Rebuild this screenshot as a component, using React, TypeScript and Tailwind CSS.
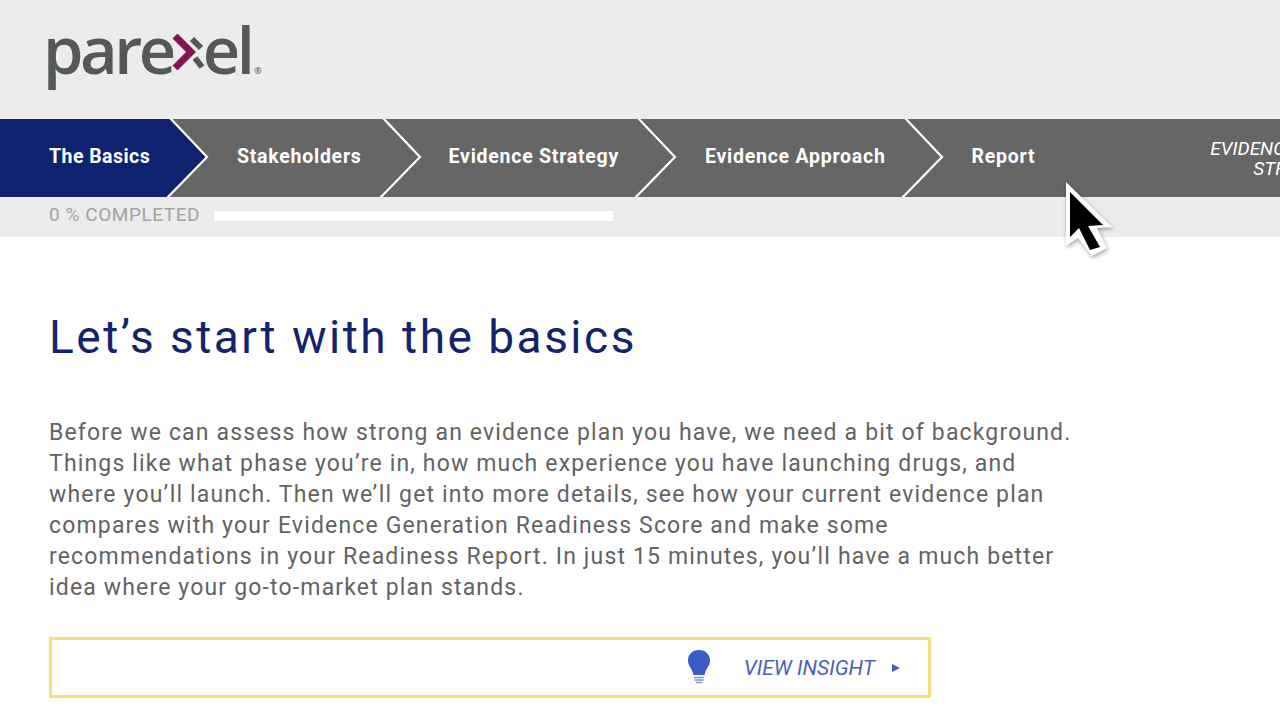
import React from 'react';

const steps = [
  { label: 'Stakeholders', ml: 'ml-[27px]', chevronMl: 'ml-[16px]' },
  { label: 'Evidence Strategy', ml: 'ml-[26px]', chevronMl: 'ml-[14px]' },
  { label: 'Evidence Approach', ml: 'ml-[27px]', chevronMl: 'ml-[14px]' },
];

function Chevron({ fill }: { fill?: string }) {
  return (
    <svg width="45" height="78" viewBox="0 0 45 78" className="shrink-0 block">
      {fill && <polygon points="0,0 5,0 42,38 2,78 0,78" fill={fill} />}
      <polyline points="5,-1 42,38 2,79" fill="none" stroke="#fff" strokeWidth="2.2" />
    </svg>
  );
}

function Logo() {
  return (
    <div className="flex items-baseline text-[#54585a] font-['Open_Sans',sans-serif] text-[65px] leading-none font-semibold tracking-[-3.5px]">
      <span>pare</span>
      <svg width="36" height="36" viewBox="0 0 36 36" className="mx-[-3px] self-end mb-[12px]">
        <path d="M22 5 L31 14 M25 24 L32 33" stroke="#54585a" strokeWidth="6" fill="none" />
        <path d="M5 2 L21 18 L5 34" stroke="#8a1250" strokeWidth="7" fill="none" />
      </svg>
      <span>el</span>
      <span className="text-[9px] tracking-normal ml-[3px]">®</span>
    </div>
  );
}

export default function App() {
  return (
    <div className="relative w-[1280px] h-[720px] overflow-hidden bg-white font-['Roboto',sans-serif]">
      <header className="h-[119px] bg-[#ececec] pl-[43px] pt-[17px]">
        <Logo />
      </header>

      <nav className="h-[78px] bg-[#666666] flex items-center overflow-hidden text-white font-bold text-[19.5px] tracking-[0.75px]">
        <div className="w-[165px] h-full bg-[#0f2270] pl-[49px] pb-[2px] flex items-center shrink-0 tracking-[0.45px]">The Basics</div>
        <Chevron fill="#0f2270" />
        {steps.map((s) => (
          <React.Fragment key={s.label}>
            <span className={`${s.ml} pb-[2px] whitespace-nowrap`}>{s.label}</span>
            <span className={s.chevronMl}>
              <Chevron />
            </span>
          </React.Fragment>
        ))}
        <span className="ml-[27px] pb-[2px]">Report</span>
        <div className="ml-[175px] shrink-0 font-normal italic text-[19px] leading-[20px] tracking-normal whitespace-nowrap">
          <div className="pt-[1px]">EVIDENCE</div>
          <div className="pl-[43px]">STRENGTH</div>
        </div>
      </nav>

      <div className="h-[40px] bg-[#ececec] pl-[49px] flex items-center pb-[3px] gap-[14px]">
        <span className="text-[19px] text-[#a3a3a3] tracking-[0.55px]">0 % COMPLETED</span>
        <div className="w-[399px] h-[10px] bg-white" />
      </div>

      <main className="pl-[49px]">
        <h1 className="mt-[70px] text-[46px] leading-[60px] font-normal text-[#14246c] tracking-[2.5px]">Let’s start with the basics</h1>
        <p className="mt-[50px] w-[1100px] text-[23px] leading-[31px] text-[#636363] tracking-[1.16px]">
          Before we can assess how strong an evidence plan you have, we need a bit of background.<br />
          Things like what phase you’re in, how much experience you have launching drugs, and<br />
          where you’ll launch. Then we’ll get into more details, see how your current evidence plan<br />
          compares with your Evidence Generation Readiness Score and make some<br />
          recommendations in your Readiness Report. In just 15 minutes, you’ll have a much better<br />
          idea where your go-to-market plan stands.
        </p>
        <div className="mt-[34px] w-[882px] h-[61px] border-[3px] border-[#f5e07c] flex items-center justify-end pr-[28px]">
          <svg width="24" height="36" viewBox="0 0 24 36" className="mr-[33px] mb-[1px]">
            <path d="M12 1 C5 1 1 6 1 11.5 C1 17 5 19 6.5 26 L17.5 26 C19 19 23 17 23 11.5 C23 6 19 1 12 1 Z" fill="#3a5cc5" />
            <path d="M7 28.5 H17 M7.5 31 H16.5 M9 33.5 H15" stroke="#7f95dc" strokeWidth="1.6" />
          </svg>
          <span className="italic text-[21px] text-[#4d60b8] pt-[2px] whitespace-nowrap">VIEW INSIGHT</span>
          <svg width="8" height="10" viewBox="0 0 8 10" className="ml-[17px]">
            <polygon points="0,1 8,5 0,9" fill="#4560b8" />
          </svg>
        </div>
      </main>

      <svg width="60" height="90" viewBox="0 0 60 90" className="absolute left-[1060px] top-[175px] drop-shadow-[1px_2px_2px_rgba(0,0,0,0.35)]">
        <polygon points="6,7 52,52 37,53 47,73 32,81 18,63 6,71" fill="#fff" />
        <polygon points="10,17 43,50 28,51 40,72 30,75 19,53 10,62" fill="#000" />
      </svg>
    </div>
  );
}
